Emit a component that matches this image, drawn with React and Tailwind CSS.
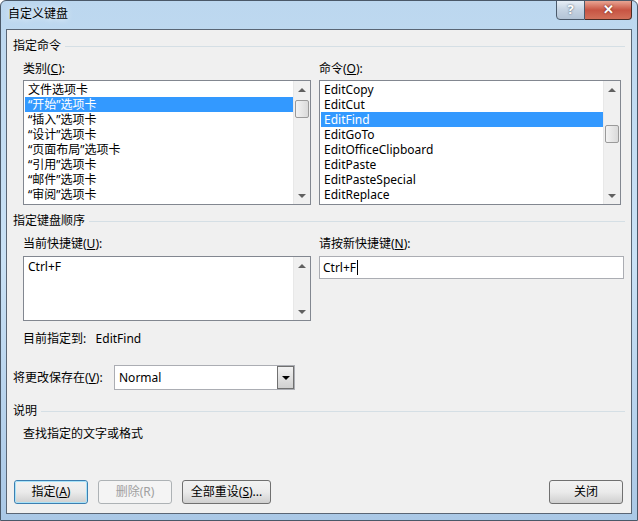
import { useState } from "react"

const fontUi = "font-['Noto_Sans','Noto_Sans_CJK_SC',sans-serif]"

function Scrollbar({ thumbTop }) {
  return (
    <div className="flex w-[17px] shrink-0 flex-col bg-[#f0f0f0] border-l border-[#e8e8e8]">
      <div className="flex h-[17px] items-center justify-center">
        <span className="block h-0 w-0 border-x-[4px] border-b-[4px] border-x-transparent border-b-[#606060]" />
      </div>
      <div className="relative flex-1 overflow-hidden">
        {thumbTop != null && (
          <div
            className="absolute left-[1px] right-[1px] h-[18px] rounded-[2px] border border-[#9a9a9a] bg-gradient-to-r from-[#f3f3f3] to-[#dadada]"
            style={{ top: thumbTop }}
          />
        )}
      </div>
      <div className="flex h-[17px] items-center justify-center">
        <span className="block h-0 w-0 border-x-[4px] border-t-[4px] border-x-transparent border-t-[#606060]" />
      </div>
    </div>
  )
}

function ListBox({ items, selected, thumbTop, className }) {
  return (
    <div className={"flex h-[125px] border border-[#828790] bg-white " + className}>
      <div className="flex-1 overflow-hidden pt-[1px] pl-[1px]">
        {items.map((item, i) => (
          <div
            key={item}
            className={
              "h-[15px] overflow-hidden pl-[3px] text-[12px] leading-[15px] whitespace-nowrap " +
              (i === selected ? "bg-[#3399ff] text-white" : "text-black")
            }
          >
            {item}
          </div>
        ))}
      </div>
      <Scrollbar thumbTop={thumbTop} />
    </div>
  )
}

function SectionHeader({ children }) {
  return (
    <div className="flex h-[16px] items-center gap-[4px] pr-[5px]">
      <span className="text-[12px] leading-[16px] text-black">{children}</span>
      <div className="h-px flex-1 bg-[#d5dfe5]" />
    </div>
  )
}

function WinButton({ children, primary, disabled, className }) {
  let border = "border-[#707070]"
  if (primary) border = "border-[#3c7fb1]"
  if (disabled) border = "border-[#adb2b5]"
  return (
    <button
      className={
        "relative h-[24px] overflow-hidden rounded-[3px] border text-[12px] " +
        border +
        " " +
        (disabled ? "text-[#a0a0a0] bg-[#f4f4f4]" : "text-black bg-gradient-to-b from-[#f2f2f2] via-[#ebebeb] to-[#cfcfcf]") +
        " " +
        className
      }
    >
      {primary && <span className="absolute inset-0 rounded-[2px] border border-[#a8e2f8]" />}
      <span className="relative">{children}</span>
    </button>
  )
}

export default function App() {
  const [novaTecla] = useState("Ctrl+F")

  const categorias = [
    "文件选项卡",
    "“开始”选项卡",
    "“插入”选项卡",
    "“设计”选项卡",
    "“页面布局”选项卡",
    "“引用”选项卡",
    "“邮件”选项卡",
    "“审阅”选项卡",
  ]

  const comandos = [
    "EditCopy",
    "EditCut",
    "EditFind",
    "EditGoTo",
    "EditOfficeClipboard",
    "EditPaste",
    "EditPasteSpecial",
    "EditReplace",
  ]

  return (
    <div
      className={
        "flex h-[521px] w-[638px] flex-col overflow-hidden rounded-t-[6px] border border-[#4a5868] bg-gradient-to-b from-[#bcd7ef] via-[#c9e1f5] to-[#aac8e6] px-[5px] pb-[6px] " +
        fontUi
      }
    >
      <header className="flex h-[28px] items-start justify-between">
        <div className="pt-[5px] pl-[2px] text-[12px] leading-[16px] text-black [text-shadow:0_0_6px_#ffffff]">
          自定义键盘
        </div>

        <div className="-mt-px flex h-[20px]">
          <div className="flex w-[29px] items-center justify-center rounded-bl-[4px] border border-[#4b5a6b] bg-gradient-to-b from-[#e6eef6] via-[#c5d3e2] to-[#b3c4d6] text-[13px] font-bold text-white [text-shadow:0_0_2px_#3a4a5a]">
            ?
          </div>
          <div className="flex w-[47px] items-center justify-center rounded-br-[4px] border border-l-0 border-[#4b2b24] bg-gradient-to-b from-[#e8a493] via-[#c75443] to-[#d2705a] text-[13px] font-bold text-white [text-shadow:0_0_2px_#5a1a10]">
            ✕
          </div>
        </div>
      </header>

      <main className="flex flex-1 flex-col border border-[#5a6675] bg-[#f0f0f0] pl-[6px] pr-[1px] pt-[8px]">
        <SectionHeader>指定命令</SectionHeader>

        <div className="mt-[7px] flex gap-[8px] pl-[10px]">
          <div className="w-[288px]">
            <div className="h-[16px] text-[12px] leading-[16px]">
              类别(<u>C</u>):
            </div>
            <ListBox className="mt-[3px]" items={categorias} selected={1} thumbTop={2} />
          </div>

          <div className="w-[302px]">
            <div className="h-[16px] text-[12px] leading-[16px]">
              命令(<u>O</u>):
            </div>
            <ListBox className="mt-[3px]" items={comandos} selected={2} thumbTop={27} />
          </div>
        </div>

        <div className="mt-[8px]">
          <SectionHeader>指定键盘顺序</SectionHeader>
        </div>

        <div className="mt-[7px] flex gap-[8px] pl-[10px]">
          <div className="w-[288px]">
            <div className="h-[16px] text-[12px] leading-[16px]">
              当前快捷键(<u>U</u>):
            </div>
            <div className="mt-[4px] flex h-[65px] border border-[#828790] bg-white">
              <div className="flex-1 pl-[4px] pt-[2px] text-[12px] leading-[15px]">Ctrl+F</div>
              <Scrollbar />
            </div>
          </div>

          <div className="w-[305px]">
            <div className="h-[16px] text-[12px] leading-[16px]">
              请按新快捷键(<u>N</u>):
            </div>
            <div className="mt-[4px] flex h-[23px] items-center border border-[#abadb3] bg-white pl-[3px] text-[12px]">
              {novaTecla}
              <span className="ml-px h-[15px] w-px bg-black" />
            </div>
          </div>
        </div>

        <div className="mt-[10px] pl-[10px] text-[12px] leading-[16px]">
          目前指定到:&nbsp;&nbsp; EditFind
        </div>

        <div className="mt-[18px] flex h-[25px] items-center">
          <span className="w-[101px] shrink-0 text-[12px] leading-[16px]">
            将更改保存在(<u>V</u>):
          </span>
          <div className="flex h-[25px] w-[181px] border border-[#abadb3] bg-white">
            <div className="flex flex-1 items-center pl-[4px] text-[12px] text-black">Normal</div>
            <div className="flex w-[17px] items-center justify-center border border-[#707070] bg-gradient-to-b from-[#f2f2f2] to-[#d0d0d0]">
              <span className="block h-0 w-0 border-x-[4px] border-t-[4px] border-x-transparent border-t-black" />
            </div>
          </div>
        </div>

        <div className="mt-[13px]">
          <SectionHeader>说明</SectionHeader>
        </div>

        <div className="mt-[7px] pl-[10px] text-[12px] leading-[16px]">查找指定的文字或格式</div>

        <div className="mt-auto mb-[9px] flex items-center pl-[1px] pr-[7px]">
          <WinButton primary className="w-[74px]">
            指定(<u>A</u>)
          </WinButton>
          <WinButton disabled className="ml-[10px] w-[74px]">
            删除(R)
          </WinButton>
          <WinButton className="ml-[10px] w-[89px]">
            全部重设(<u>S</u>)...
          </WinButton>
          <WinButton className="ml-auto w-[74px]">关闭</WinButton>
        </div>
      </main>
    </div>
  )
}
